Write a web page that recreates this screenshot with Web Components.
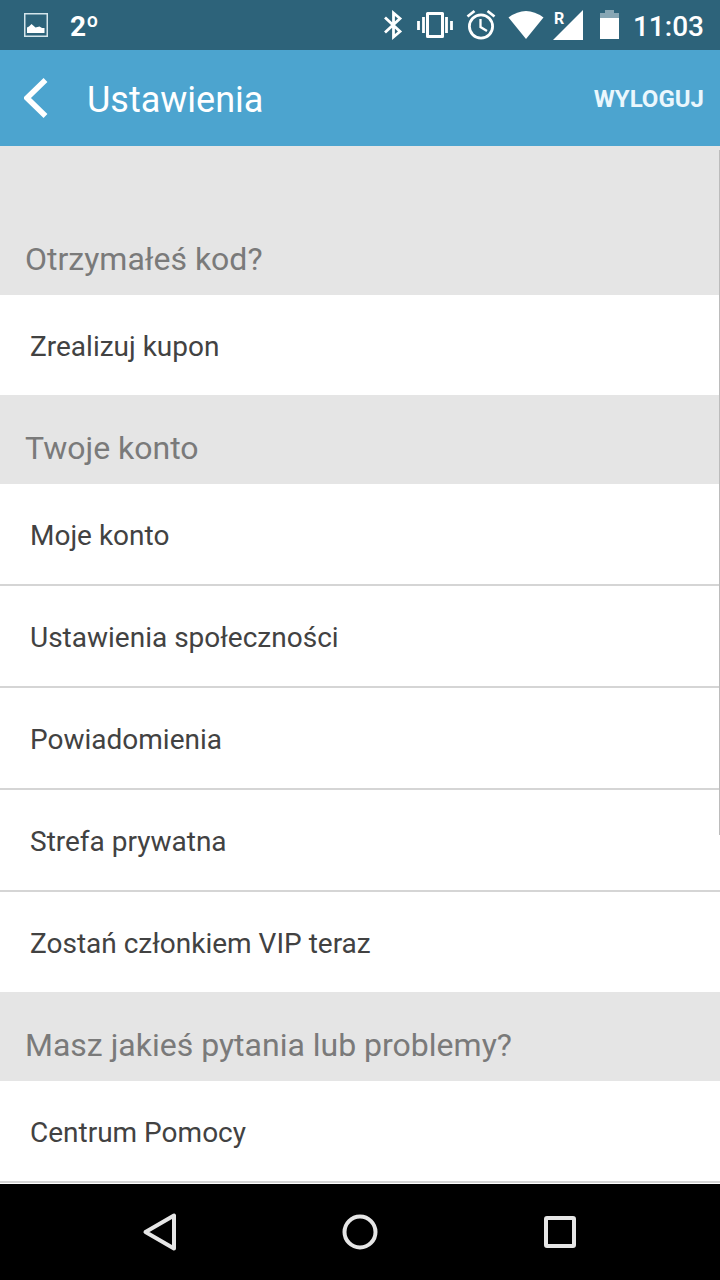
<!DOCTYPE html>
<html lang="pl">
<head>
<meta charset="utf-8">
<meta name="viewport" content="width=device-width, initial-scale=1">
<title>Ustawienia</title>
<style>
  html, body { margin: 0; height: 100%; }
  body { font-family: Roboto, "Noto Sans", sans-serif; background: #000; }
</style>
</head>
<body>
<settings-screen></settings-screen>
<script>
const define = (name, html) => customElements.define(name, class extends HTMLElement {
  constructor() {
    super();
    const t = document.createElement('template');
    t.innerHTML = html;
    this.attachShadow({ mode: 'open' }).append(t.content.cloneNode(true));
  }
});

define('status-bar', `
<style>
  :host { display: flex; align-items: center; justify-content: space-between; height: 50px; padding: 0 16px 0 24px; box-sizing: border-box; background: #2d637a; color: #fff; }
  .group { display: flex; align-items: center; gap: 8px; }
  .left { gap: 22px; }
  svg { display: block; overflow: visible; flex: none; }
  span, time { padding-top: 4px; font-size: 28px; line-height: 46px; }
  span { font-weight: 700; }
  time { font-weight: 500; }
</style>
<div class="group left">
  <svg width="24" height="24" viewBox="0 0 24 24" aria-hidden="true"><rect x=".75" y=".75" width="22.5" height="22.5" fill="none" stroke="#d4e5eb" stroke-width="1.5"/><path d="M3 20V14.500L5 13.500L7.500 11L11.500 14.500L15.500 13.500L18 15L20.500 15V20Z" fill="#fff"/></svg>
  <span>2º</span>
</div>
<div class="group">
  <svg width="32" height="30" viewBox="-1 0 32 30" aria-label="Bluetooth"><path d="M7 7.500L22 21.500L15.500 27V3L22 8.500L7 22.500" fill="none" stroke="#fff" stroke-width="2.800"/></svg>
  <svg width="36" height="30" viewBox="-1 0 36 30" aria-label="Wibracje"><path d="M9.500 3.500H24.500V26.500H9.500Z" fill="none" stroke="#fff" stroke-width="3" stroke-linejoin="round"/><path d="M5.500 7V23M.500 11V20M28.500 7V23M33.500 11V20" stroke="#fff" stroke-width="2.800"/></svg>
  <svg width="36" height="30" viewBox="-1 0 36 30" aria-label="Budzik"><g fill="none" stroke="#fff" stroke-width="2.800"><circle cx="19" cy="16.500" r="11.600"/><path d="M5.500 6.500L12.500 1M32.500 6.500L25.500 1"/><path d="M18.500 9V17L25 21" stroke-width="2.300"/></g></svg>
  <svg width="36" height="30" viewBox="-1 0 36 30" aria-label="Wi-Fi"><path d="M2.500 7.500Q20 -5.500 37.500 7.500L20 29Z" fill="#fff"/></svg>
  <svg width="36" height="30" viewBox="-1 0 36 30" aria-label="Sygnał, roaming"><path d="M33 0V30H3Z" fill="#fff"/><text x="4" y="14" font-size="16" font-weight="700" fill="#fff">R</text></svg>
  <svg width="32" height="30" viewBox="-1 0 32 30" aria-label="Bateria"><path d="M6 8V3H11V0H20V3H25V8Z" fill="#87a6b4"/><path d="M6 8H25V29H6Z" fill="#fff"/></svg>
  <time>11:03</time>
</div>`);

define('app-bar', `
<style>
  :host { display: flex; align-items: center; height: 96px; padding: 0 16px 0 24px; box-sizing: border-box; background: #4ca4cf; color: #fff; }
  button { border: 0; padding: 0; background: none; color: inherit; font: inherit; cursor: pointer; }
  .back { width: 63px; height: 96px; }
  svg { display: block; }
  h1 { flex: 1; margin: 0; padding-top: 4px; font-size: 36px; font-weight: 400; line-height: 48px; }
  .action { padding-top: 2px; color: #eaf7fd; font-size: 24px; font-weight: 700; line-height: 48px; }
</style>
<button class="back" aria-label="Wstecz"><svg width="24" height="40" viewBox="0 0 24 40"><path d="M21.500 2L3 20L21.500 38" fill="none" stroke="#fff" stroke-width="5.500"/></svg></button>
<h1><slot></slot></h1>
<button class="action"><slot name="action"></slot></button>`);

define('settings-section', `
<style>
  :host { display: block; background: #e5e5e5; }
  h2 { margin: 0; padding: 33px 25px 16px; font-size: 32px; font-weight: 400; line-height: 40px; color: #7a7a7a; }
  div { background: #fff; }
</style>
<h2><slot name="title"></slot></h2>
<div><slot></slot></div>`);

define('settings-item', `
<style>
  :host { display: block; border-bottom: 2px solid #d5d5d5; }
  :host(:last-of-type:not([divider])) { border-bottom: 0; }
  a { display: block; padding: 32px 30px 28px; font-size: 28px; line-height: 40px; color: #424242; text-decoration: none; }
</style>
<a href="#"><slot></slot></a>`);

define('nav-bar', `
<style>
  :host { display: flex; justify-content: center; height: 96px; background: #000; }
  button { width: 200px; border: 0; padding: 0; background: none; display: grid; place-items: center; }
  svg { display: block; fill: none; stroke: #e6e6e6; stroke-width: 4; stroke-linejoin: round; }
</style>
<button aria-label="Wstecz"><svg width="40" height="40" viewBox="0 0 40 40"><path d="M34 3.500V36.500L5.500 20Z"/></svg></button>
<button aria-label="Ekran główny"><svg width="40" height="40" viewBox="0 0 40 40"><circle cx="20" cy="20" r="15.500"/></svg></button>
<button aria-label="Ostatnie"><svg width="40" height="40" viewBox="0 0 40 40"><rect x="6" y="6" width="28" height="28" rx="1"/></svg></button>`);

define('settings-screen', `
<style>
  :host { display: flex; flex-direction: column; height: 100vh; }
  status-bar, app-bar, nav-bar { flex: none; }
  main { flex: 1; min-height: 0; overflow: hidden; position: relative; background: #fff; }
  main::after { content: ""; position: absolute; top: 4px; right: 0; width: 1px; height: 66%; background: #bcbcbc; }
  .first { padding-top: 60px; }
</style>
<status-bar></status-bar>
<app-bar>Ustawienia<span slot="action">WYLOGUJ</span></app-bar>
<main>
  <settings-section class="first"><span slot="title">Otrzymałeś kod?</span>
    <settings-item>Zrealizuj kupon</settings-item>
  </settings-section>
  <settings-section><span slot="title">Twoje konto</span>
    <settings-item>Moje konto</settings-item>
    <settings-item>Ustawienia społeczności</settings-item>
    <settings-item>Powiadomienia</settings-item>
    <settings-item>Strefa prywatna</settings-item>
    <settings-item>Zostań członkiem VIP teraz</settings-item>
  </settings-section>
  <settings-section><span slot="title">Masz jakieś pytania lub problemy?</span>
    <settings-item divider>Centrum Pomocy</settings-item>
  </settings-section>
</main>
<nav-bar></nav-bar>`);
</script>
</body>
</html>
